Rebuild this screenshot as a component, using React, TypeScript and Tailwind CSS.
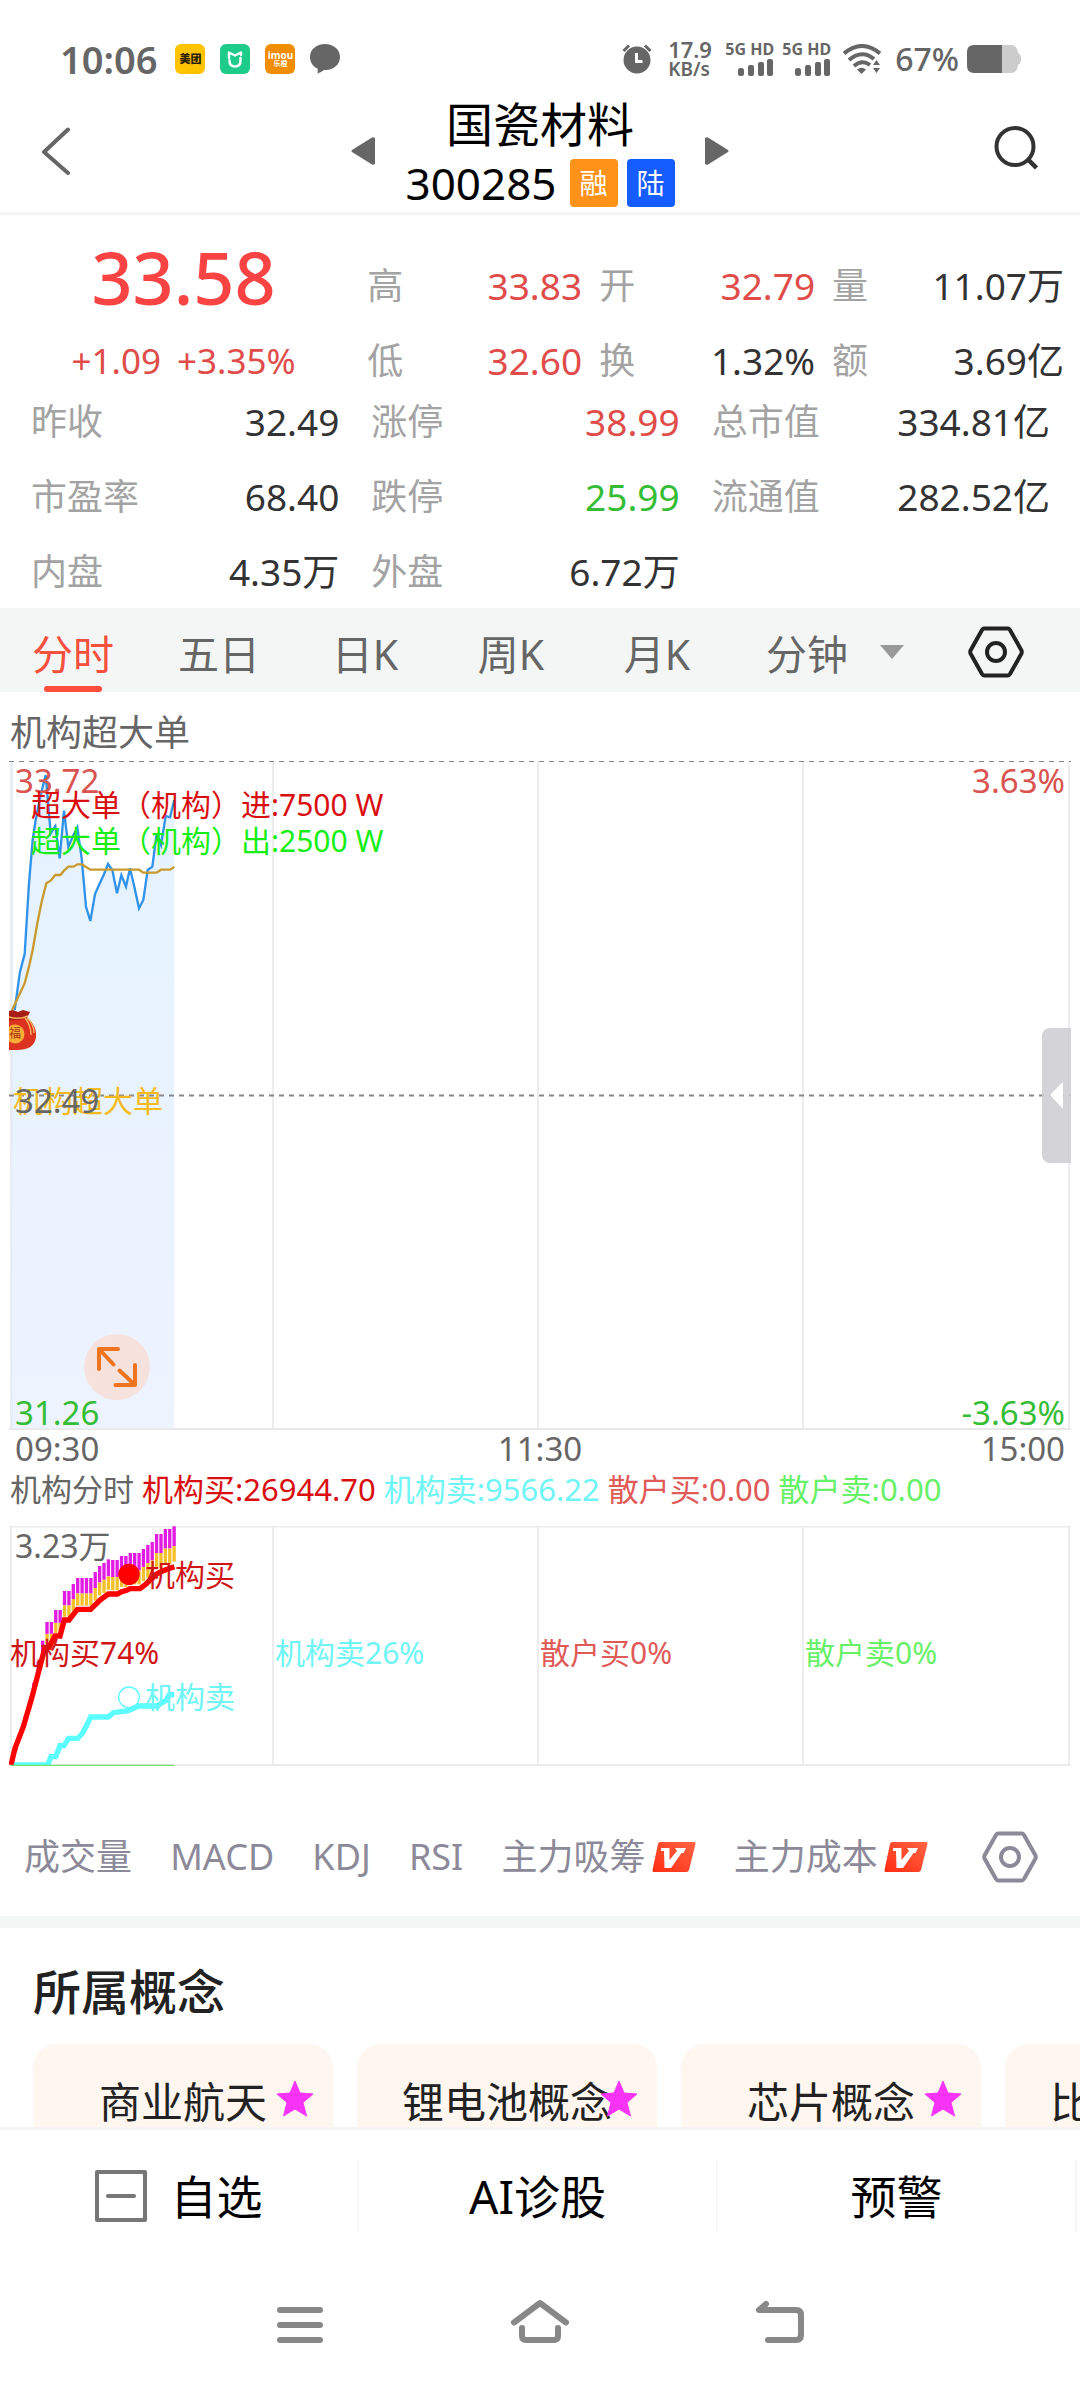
import type { ReactNode } from "react";
import clsx from "clsx";

interface QuoteItemProps {
    label: string;
    value: string;
    tone?: "up" | "down";
}

const topQuotes: QuoteItemProps[] = [
    { label: "高", value: "33.83", tone: "up" },
    { label: "开", value: "32.79", tone: "up" },
    { label: "量", value: "11.07万" },
    { label: "低", value: "32.60", tone: "up" },
    { label: "换", value: "1.32%" },
    { label: "额", value: "3.69亿" },
];

const quotes: QuoteItemProps[] = [
    { label: "昨收", value: "32.49" },
    { label: "涨停", value: "38.99", tone: "up" },
    { label: "总市值", value: "334.81亿" },
    { label: "市盈率", value: "68.40" },
    { label: "跌停", value: "25.99", tone: "down" },
    { label: "流通值", value: "282.52亿" },
    { label: "内盘", value: "4.35万" },
    { label: "外盘", value: "6.72万" },
];

const tabs = ["分时", "五日", "日K", "周K", "月K"];

const indicators = [
    { name: "成交量" },
    { name: "MACD" },
    { name: "KDJ" },
    { name: "RSI" },
    { name: "主力吸筹", vip: true },
    { name: "主力成本", vip: true },
];

const concepts = ["商业航天", "锂电池概念", "芯片概念", "比亚迪概念"];

// chart data is kept at three units per pixel
const price =
    "44,840 60,725 74,672 87,460 98,330 107,270 122,195 137,135 145,225 152,310 166,288 179,385 192,242 205,350 218,320 232,292 245,385 258,530 271,573 285,492 297,465 311,435 324,402 337,420 351,490 364,435 378,470 390,415 404,475 417,535 430,510 443,420 457,410 470,310 483,345 497,258 510,262 523,210";
const average =
    "36,840 48,815 74,760 87,710 98,660 112,580 125,515 139,460 152,452 166,435 181,435 192,422 205,410 221,410 232,403 246,403 258,411 271,419 417,419 430,428 470,428 483,419 510,419 523,411";
const buyLine =
    "33,795 45,745 70,680 95,595 112,530 135,442 147,442 165,408 180,408 193,360 207,360 232,328 272,328 300,300 325,282 352,282 365,275 380,271 390,266 420,266 435,255 470,222 490,212 505,206 523,200";
const sellLine =
    "33,795 143,795 153,770 167,770 180,737 192,737 206,715 233,715 246,702 258,680 272,651 325,651 340,638 385,632 415,618 470,618 500,600 507,585 523,583";
const barTops = [
    745, 690, 650, 602, 548, 484, 422, 366, 366, 330, 330, 273, 273, 252, 234, 234, 234, 234, 216, 198, 189, 178, 180,
    180, 168, 168, 159, 159, 159, 147, 135, 126, 102, 102, 87, 87, 79,
];

const QuoteItem = ({ label, value, tone }: QuoteItemProps) => {
    return (
        <div className="flex justify-between leading-[60px]">
            <dt className="text-[#a3a3a3]">{label}</dt>
            <dd
                className={clsx(
                    "text-[37px]",
                    tone === "up" && "text-[#e04c4a]",
                    tone === "down" && "text-[#35bd35]",
                    !tone && "text-[#333333]"
                )}
            >
                {value}
            </dd>
        </div>
    );
};

const HexIcon = () => (
    <svg viewBox="0 0 56 54" className="h-[54px] w-14" fill="none" stroke="currentColor" strokeWidth="4" strokeLinejoin="round">
        <path d="M16 3.500H40Q41 3.500 42 5L53.500 25.500Q54 27 53.500 28.500L42 49Q41 50.500 40 50.500H16Q15 50.500 14 49L2.500 28.500Q2 27 2.500 25.500L14 5Q15 3.500 16 3.500Z" />
        <circle cx="28" cy="27" r="9" />
    </svg>
);

const VipIcon = () => (
    <svg viewBox="0 0 44 30" className="h-[30px] w-11">
        <defs>
            <linearGradient id="vip" x1="0" y1="1" x2="1" y2="0">
                <stop offset="0" stopColor="#ff2d12" />
                <stop offset="1" stopColor="#ff6444" />
            </linearGradient>
        </defs>
        <path d="M8 0H42Q44 0 43.500 2L37 28Q36.500 30 34.500 30H2Q0 30 .5 28L6 2Q6.500 0 8 0Z" fill="url(#vip)" />
        <path d="M9 6H17.500V18L25 9L23 6H34L31.500 11H29.500L19 26H12.500L12 9H9Z" fill="#fff" />
    </svg>
);

const SignalIcon = () => (
    <div className="flex w-12 flex-col items-end gap-0.5">
        <span className="text-base leading-4 font-bold whitespace-nowrap">5G HD</span>
        <svg viewBox="0 0 36 18" className="h-[18px] w-9" fill="currentColor">
            <rect x="0" y="9" width="6" height="8" rx="2.500" />
            <rect x="10" y="6" width="6" height="11" rx="2" />
            <rect x="20" y="3" width="6" height="14" rx="2" />
            <rect x="29" y="0" width="6" height="17" rx="2" />
        </svg>
    </div>
);

const StatusBar = () => {
    return (
        <div className="flex h-20 items-center justify-between pt-[38px] pr-[59px] pl-[60px] text-[#666666]">
            <div className="flex items-center">
                <span className="mr-[18px] text-[38px] leading-10 font-semibold">10:06</span>
                <div className="flex gap-[15px]">
                    <span className="flex size-[30px] items-center justify-center rounded-md bg-[#ffc300] text-[11px] font-black text-[#2b2100]">
                        美团
                    </span>
                    <svg viewBox="0 0 30 30" className="size-[30px]">
                        <rect width="30" height="30" rx="6" fill="#1dcb8b" />
                        <path d="M9 14V8.500L15 11.500L21 8.500V11" fill="none" stroke="#fff" strokeWidth="2.500" strokeLinejoin="round" strokeLinecap="round" />
                        <path d="M9.500 16.500Q9.500 22.500 15 22.500T20.500 16.500V14" fill="none" stroke="#fff" strokeWidth="2.500" strokeLinecap="round" />
                    </svg>
                    <span className="flex size-[30px] flex-col items-center justify-center rounded-md bg-[#f28c00] text-white">
                        <span className="text-[10px] leading-[10px] font-bold">imou</span>
                        <span className="text-[7px] leading-[8px] font-bold">乐橙</span>
                    </span>
                    <svg viewBox="0 0 30 30" className="size-[30px]" fill="currentColor">
                        <path d="M15 0C23.500 0 30 5.500 30 13S23.500 26 16 26H14Q11 28.500 7.500 29.500Q8 27 7.500 24.500C3 22.500 0 18.500 0 13C0 5.500 6.500 0 15 0Z" />
                    </svg>
                </div>
            </div>
            <div className="flex items-center">
                <svg viewBox="0 0 30 30" className="mr-4 size-[30px]">
                    <circle cx="15" cy="16" r="13.500" fill="currentColor" />
                    <path d="M1.500 7L7 1.500M28.500 7L23 1.500" stroke="currentColor" strokeWidth="3" />
                    <path d="M14.500 9V17.500H20.500" fill="none" stroke="#fff" strokeWidth="3" />
                </svg>
                <div className="mr-3.5 flex w-11 flex-col font-semibold">
                    <span className="text-[22px] leading-5">17.9</span>
                    <span className="text-[19px] leading-5">KB/s</span>
                </div>
                <div className="mr-3 flex gap-[9px]">
                    <SignalIcon />
                    <SignalIcon />
                </div>
                <svg viewBox="0 0 38 30" className="mr-3.5 h-[30px] w-[38px]" fill="none" stroke="currentColor" strokeWidth="4">
                    <path d="M1 9.500Q19 -5.500 37 9.500" />
                    <path d="M6 16Q19 5 31 15" />
                    <path d="M11 22Q19 15 27 21" />
                    <path d="M14 25.500Q18.500 22 23 25.500L18.500 30Z" fill="currentColor" stroke="none" />
                    <path d="M30 21L33.500 16L37 21ZM30 24L33.500 29L37 24Z" fill="currentColor" stroke="none" />
                </svg>
                <span className="mr-2 text-[32px] leading-10 font-medium">67%</span>
                <svg viewBox="0 0 54 28" className="h-7 w-[54px]">
                    <path d="M35 0H44Q50 0 51 8Q54 9 54 14T51 20Q50 28 44 28H35Z" fill="#cccccc" />
                    <path d="M35 0H7Q0 0 0 7V21Q0 28 7 28H35Z" fill="currentColor" />
                </svg>
            </div>
        </div>
    );
};

const Header = () => {
    return (
        <header className="flex items-center justify-between border-b-3 border-[#f5f5f5] px-10 pt-3.5 pb-[5px]">
            <button aria-label="返回" className="flex w-12 text-[#666666]">
                <svg viewBox="0 0 30 48" className="h-12 w-[30px]" fill="none" stroke="currentColor" strokeWidth="4" strokeLinecap="round" strokeLinejoin="round">
                    <path d="M28 2.500L4 25L28 46" />
                </svg>
            </button>
            <div className="flex items-center gap-[30px]">
                <button aria-label="上一只" className="text-[#666666]">
                    <svg viewBox="0 0 24 28" className="h-7 w-6" fill="currentColor">
                        <path d="M1 13Q0 14 1 15L21 27.500Q24 28.500 24 26V2Q24 -.5 21 .5Z" />
                    </svg>
                </button>
                <div className="flex flex-col items-center gap-[5px]">
                    <h1 className="text-[47px] leading-[60px]">国瓷材料</h1>
                    <div className="flex items-center gap-[9px]">
                        <span className="mr-1 text-[44px] leading-[48px]">300285</span>
                        <span className="size-12 rounded-sm bg-[#ff931a] text-center text-[28px] leading-[48px] text-white">融</span>
                        <span className="size-12 rounded-sm bg-[#165dff] text-center text-[28px] leading-[48px] text-white">陆</span>
                    </div>
                </div>
                <button aria-label="下一只" className="text-[#666666]">
                    <svg viewBox="0 0 24 28" className="h-7 w-6" fill="currentColor">
                        <path d="M23 13Q24 14 23 15L3 27.500Q0 28.500 0 26V2Q0 -.5 3 .5Z" />
                    </svg>
                </button>
            </div>
            <button aria-label="搜索" className="flex w-12 justify-start pb-1.5 text-[#333333]">
                <svg viewBox="0 0 46 46" className="size-[46px]" fill="none" stroke="currentColor" strokeWidth="4">
                    <circle cx="23" cy="21.500" r="18.500" />
                    <path d="M35.500 34L44.500 43" strokeWidth="4.500" />
                </svg>
            </button>
        </header>
    );
};

const Quotes = () => {
    return (
        <section className="pt-8 pb-1.5 text-[36px]">
            <div className="flex">
                <div className="flex w-[34%] flex-col items-center gap-6 text-[#fa4343]">
                    <strong className="text-[72px] leading-[60px] font-medium">33.58</strong>
                    <p className="flex gap-4 text-[35px] leading-[60px] text-[#e04c4a]">
                        <span>+1.09</span>
                        <span>+3.35%</span>
                    </p>
                </div>
                <dl className="grid grow grid-cols-[215fr_216fr_232fr] gap-x-[17px] gap-y-[15px] pt-[9px] pr-4">
                    {topQuotes.map((item) => (
                        <QuoteItem key={item.label} {...item} />
                    ))}
                </dl>
            </div>
            <dl className="mt-px grid grid-cols-[308fr_308fr_338fr] gap-x-8 gap-y-[15px] pr-[30px] pl-[31px]">
                {quotes.map((item) => (
                    <QuoteItem key={item.label} {...item} />
                ))}
            </dl>
        </section>
    );
};

const PeriodTabs = () => {
    return (
        <nav className="flex h-[84px] items-stretch bg-[#f4f6f5] text-[41px] text-[#666666]">
            {tabs.map((tab, i) => (
                <button
                    key={tab}
                    className={clsx("relative flex-[146] pt-2 leading-[76px]", i === 0 && "text-[#f4503e]")}
                >
                    {tab}
                    {i === 0 && <span className="absolute inset-x-11 bottom-0 h-1.5 rounded-full bg-[#ff4d3d]" />}
                </button>
            ))}
            <div className="relative flex-[182] pt-2">
                <select aria-label="分钟" className="h-[76px] w-full appearance-none bg-transparent pl-9 leading-[76px]">
                    <option>分钟</option>
                </select>
                <svg viewBox="0 0 24 14" className="pointer-events-none absolute top-[37px] right-2 h-3.5 w-6" fill="#999999">
                    <path d="M0 0H24L12 14Z" />
                </svg>
            </div>
            <button aria-label="设置" className="flex flex-[168] items-center justify-center pt-1 text-[#222222]">
                <HexIcon />
            </button>
        </nav>
    );
};

const GridLines = ({ height }: { height: number }) => (
    <path
        d={`M2 0V${height}M264 0V${height}M529 0V${height}M794 0V${height}M1060 0V${height}`}
        stroke="#ededed"
        strokeWidth="2"
    />
);

const PriceChart = () => {
    return (
        <div className="relative mx-[9px] h-[669px] text-[33px] leading-10">
            <svg viewBox="0 0 1062 669" preserveAspectRatio="none" className="absolute inset-0 size-full" fill="none">
                <defs>
                    <linearGradient id="area" x1="0" y1="0" x2="0" y2="1">
                        <stop offset="0" stopColor="#e5f2ff" />
                        <stop offset="1" stopColor="#edf3ff" />
                    </linearGradient>
                </defs>
                <GridLines height={668} />
                <path d="M0 668H1062" stroke="#e8e8e8" strokeWidth="2" />
                <g transform="translate(-9 -31) scale(0.333333)">
                    <polygon points={`33,2095 33,840 ${price} 523,2095`} fill="url(#area)" />
                    <path d="M36 93V2095" stroke="#e4ebf5" strokeWidth="4" />
                    <polyline points={price} stroke="#2f93ec" strokeWidth="7" />
                    <polyline points={average} stroke="#c99a2e" strokeWidth="7" />
                </g>
                <path d="M0 .5H1062" stroke="#888" strokeDasharray="5 5" />
                <path d="M0 334.500H1062" stroke="#888" strokeWidth="2" strokeDasharray="5 5" />
            </svg>
            <svg viewBox="0 0 28 42" className="absolute top-[248px] left-0 h-[42px] w-7">
                <path d="M0 11Q13 8 18 9C24 13 28 20 27 28C26 37 19 41 8 41H0Z" fill="#dc3220" />
                <path d="M0 2L4 1L9 3L14 1L21 3L18 9Q10 12 0 11Z" fill="#a91d17" />
                <path d="M0 8Q10 11 19 7M18 9Q25 15 25 24M16 9Q22 16 22 26" fill="none" stroke="#f6b35d" strokeWidth="1.500" />
                <circle cx="6" cy="25" r="9.500" fill="#f9ae38" />
                <text x="0" y="29" fontSize="12" fill="#a8300f">福</text>
            </svg>
            <span className="absolute top-0 left-1.5 text-[#d9534f]">33.72</span>
            <span className="absolute top-0 right-1.5 text-[#d9534f]">3.63%</span>
            <p className="absolute top-[26px] left-[22px] text-[30px] leading-9 text-[#d90f0f]">
                超大单（机构）进:7500 W
                <br />
                <span className="text-[#16ee16]">超大单（机构）出:2500 W</span>
            </p>
            <span className="absolute top-80 left-1 text-[30px] text-[#f5bb1d]">机构超大单</span>
            <span className="absolute top-80 left-1.5 text-[#666666]">32.49</span>
            <span className="absolute bottom-[-3px] left-1.5 text-[#35bd35]">31.26</span>
            <span className="absolute right-1.5 bottom-[-3px] text-[#35bd35]">-3.63%</span>
            <button aria-label="放大" className="absolute bottom-[30px] left-[75px] size-[66px] rounded-full bg-[#f6e2dd]">
                <svg viewBox="0 0 66 66" className="size-full" fill="none" stroke="#ee7420" strokeWidth="4" strokeLinecap="round" strokeLinejoin="round">
                    <path d="M15 35V15H34M15 15L29.500 30.500M51 31V51H31.500M51 51L35.500 36.500" />
                </svg>
            </button>
            <button aria-label="展开" className="absolute top-[267px] right-0 h-[135px] w-[29px] rounded-l-lg bg-[#cccbd1]/85">
                <svg viewBox="0 0 29 135" className="size-full" fill="#fff">
                    <path d="M8 67L21 54V81Z" />
                </svg>
            </button>
        </div>
    );
};

const FlowChart = () => {
    return (
        <div className="relative mx-[9px] mt-4 h-60 text-[30px] leading-10">
            <svg viewBox="0 0 1062 240" preserveAspectRatio="none" className="absolute inset-0 size-full" fill="none">
                <GridLines height={239} />
                <path d="M0 .5H1062M0 239H1062" stroke="#ebebeb" strokeWidth="2" />
                <g transform="translate(-9 -26) scale(0.333333)">
                    {barTops.map((top, i) => {
                        const x = 49 + i * 13.150;
                        const full = 795 - top;
                        return (
                            <g key={i}>
                                <rect x={x - 5} y={top} width="10" height={full * 0.083} fill="#e21be2" />
                                <rect x={x - 5} y={top + full * 0.083} width="10" height={full * 0.065} fill="#f5c02c" />
                            </g>
                        );
                    })}
                    <polyline points={sellLine} stroke="#5cffff" strokeWidth="16" />
                    <polyline points={buyLine} stroke="#ff0000" strokeWidth="16" />
                    <path d="M33 796H523" stroke="#6fe26f" strokeWidth="4" />
                    <circle cx="387" cy="223" r="32" fill="#ff0000" />
                    <circle cx="387" cy="592" r="31" stroke="#5cffff" strokeWidth="4" />
                </g>
            </svg>
            <span className="absolute top-0 left-1.5 text-[32px] text-[#666666]">3.23万</span>
            <span className="absolute top-[29px] left-[136px] text-[#d01515]">机构买</span>
            <span className="absolute top-[151px] left-[136px] text-[#6ff5f5]">机构卖</span>
            <div className="absolute inset-x-px top-[107px] grid grid-cols-4">
                <span className="text-[#d01515]">机构买74%</span>
                <span className="text-[#6ff5f5]">机构卖26%</span>
                <span className="text-[#e05a58]">散户买0%</span>
                <span className="text-[#68f068]">散户卖0%</span>
            </div>
        </div>
    );
};

const Charts = () => {
    return (
        <section className="text-[#666666]">
            <h2 className="px-2.5 pt-[17px] pb-1 text-[36px] leading-[48px]">机构超大单</h2>
            <PriceChart />
            <div className="flex justify-between px-[15px] text-[33px] leading-[38px]">
                <span>09:30</span>
                <span>11:30</span>
                <span>15:00</span>
            </div>
            <div className="flex gap-2 px-2.5 text-[31px] leading-[42px] whitespace-nowrap">
                <span>机构分时</span>
                <span className="text-[#d90f0f]">机构买:26944.70</span>
                <span className="text-[#6ff5f5]">机构卖:9566.22</span>
                <span className="text-[#e05a58]">散户买:0.00</span>
                <span className="text-[#68f068]">散户卖:0.00</span>
            </div>
            <FlowChart />
        </section>
    );
};

const IndicatorBar = () => {
    return (
        <div className="flex h-[150px] items-center justify-between pt-8 pr-[42px] pl-6 text-[36px] leading-[48px] text-[#8c8a99]">
            {indicators.map((item) => (
                <button key={item.name} className="flex items-center gap-1.5">
                    {item.name}
                    {item.vip && <VipIcon />}
                </button>
            ))}
            <button aria-label="指标设置" className="ml-4">
                <HexIcon />
            </button>
        </div>
    );
};

const Concepts = () => {
    return (
        <section className="overflow-hidden border-t-12 border-[#f4f6f6] pt-7 pl-[33px] text-[#222222]">
            <h2 className="text-[48px] leading-[72px] font-medium">所属概念</h2>
            <div className="mt-4 flex h-[83px] gap-6 overflow-hidden">
                {concepts.map((name) => (
                    <a key={name} href="#" className="relative h-[116px] w-[300px] shrink-0 rounded-3xl bg-[#fff6f0] text-center text-[42px] leading-[116px]">
                        {name}
                        <svg viewBox="0 0 36 36" className="absolute top-[37px] right-5 size-9" fill="#f733f7">
                            <path d="M18 0L23 12L36 13L26 21.500L29.500 35L18 28L6.500 35L10 21.500L0 13L13 12Z" stroke="#f733f7" strokeLinejoin="round" />
                        </svg>
                    </a>
                ))}
            </div>
        </section>
    );
};

const ActionButton = ({ children }: { children: ReactNode }) => (
    <button className="flex h-[72px] flex-1 items-center justify-center gap-6 border-r-2 border-[#f7f7f7] text-[46px] leading-[72px]">
        {children}
    </button>
);

const BottomBar = () => {
    return (
        <footer>
            <div className="flex border-t-3 border-[#f4f6f6] pt-[30px] pr-[3px]">
                <ActionButton>
                    <svg viewBox="0 0 52 52" className="size-[52px]" fill="none" stroke="#777777" strokeWidth="4" strokeLinejoin="round">
                        <rect x="2" y="2" width="48" height="48" />
                        <path d="M13 26H39" strokeLinecap="round" />
                    </svg>
                    自选
                </ActionButton>
                <ActionButton>AI诊股</ActionButton>
                <ActionButton>预警</ActionButton>
            </div>
            <div className="flex justify-center gap-45 pt-[66px] pb-[30px] text-[#888888]">
                <button aria-label="最近任务">
                    <svg viewBox="0 0 60 60" className="size-[60px]" stroke="currentColor" strokeWidth="6" strokeLinecap="round">
                        <path d="M10 12H50M10 27H50M10 42H50" />
                    </svg>
                </button>
                <button aria-label="主页">
                    <svg viewBox="0 0 60 60" className="size-[60px]" fill="none" stroke="currentColor" strokeWidth="6" strokeLinecap="round" strokeLinejoin="round">
                        <path d="M4 24.500L30 5L56 24.500" />
                        <path d="M12 30V38Q12 42 16 42H44Q48 42 48 38V30" />
                    </svg>
                </button>
                <button aria-label="后退">
                    <svg viewBox="0 0 60 60" className="size-[60px]" fill="none" stroke="currentColor" strokeWidth="6" strokeLinecap="round" strokeLinejoin="round">
                        <path d="M16 6L9 12H46Q51 12 51 17V37Q51 42 46 42H18" />
                    </svg>
                </button>
            </div>
        </footer>
    );
};

export default function App() {
    return (
        <main className="overflow-hidden bg-white font-['Noto_Sans','Noto_Sans_CJK_SC',sans-serif] text-black">
            <StatusBar />
            <Header />
            <Quotes />
            <PeriodTabs />
            <Charts />
            <IndicatorBar />
            <Concepts />
            <BottomBar />
        </main>
    );
}
